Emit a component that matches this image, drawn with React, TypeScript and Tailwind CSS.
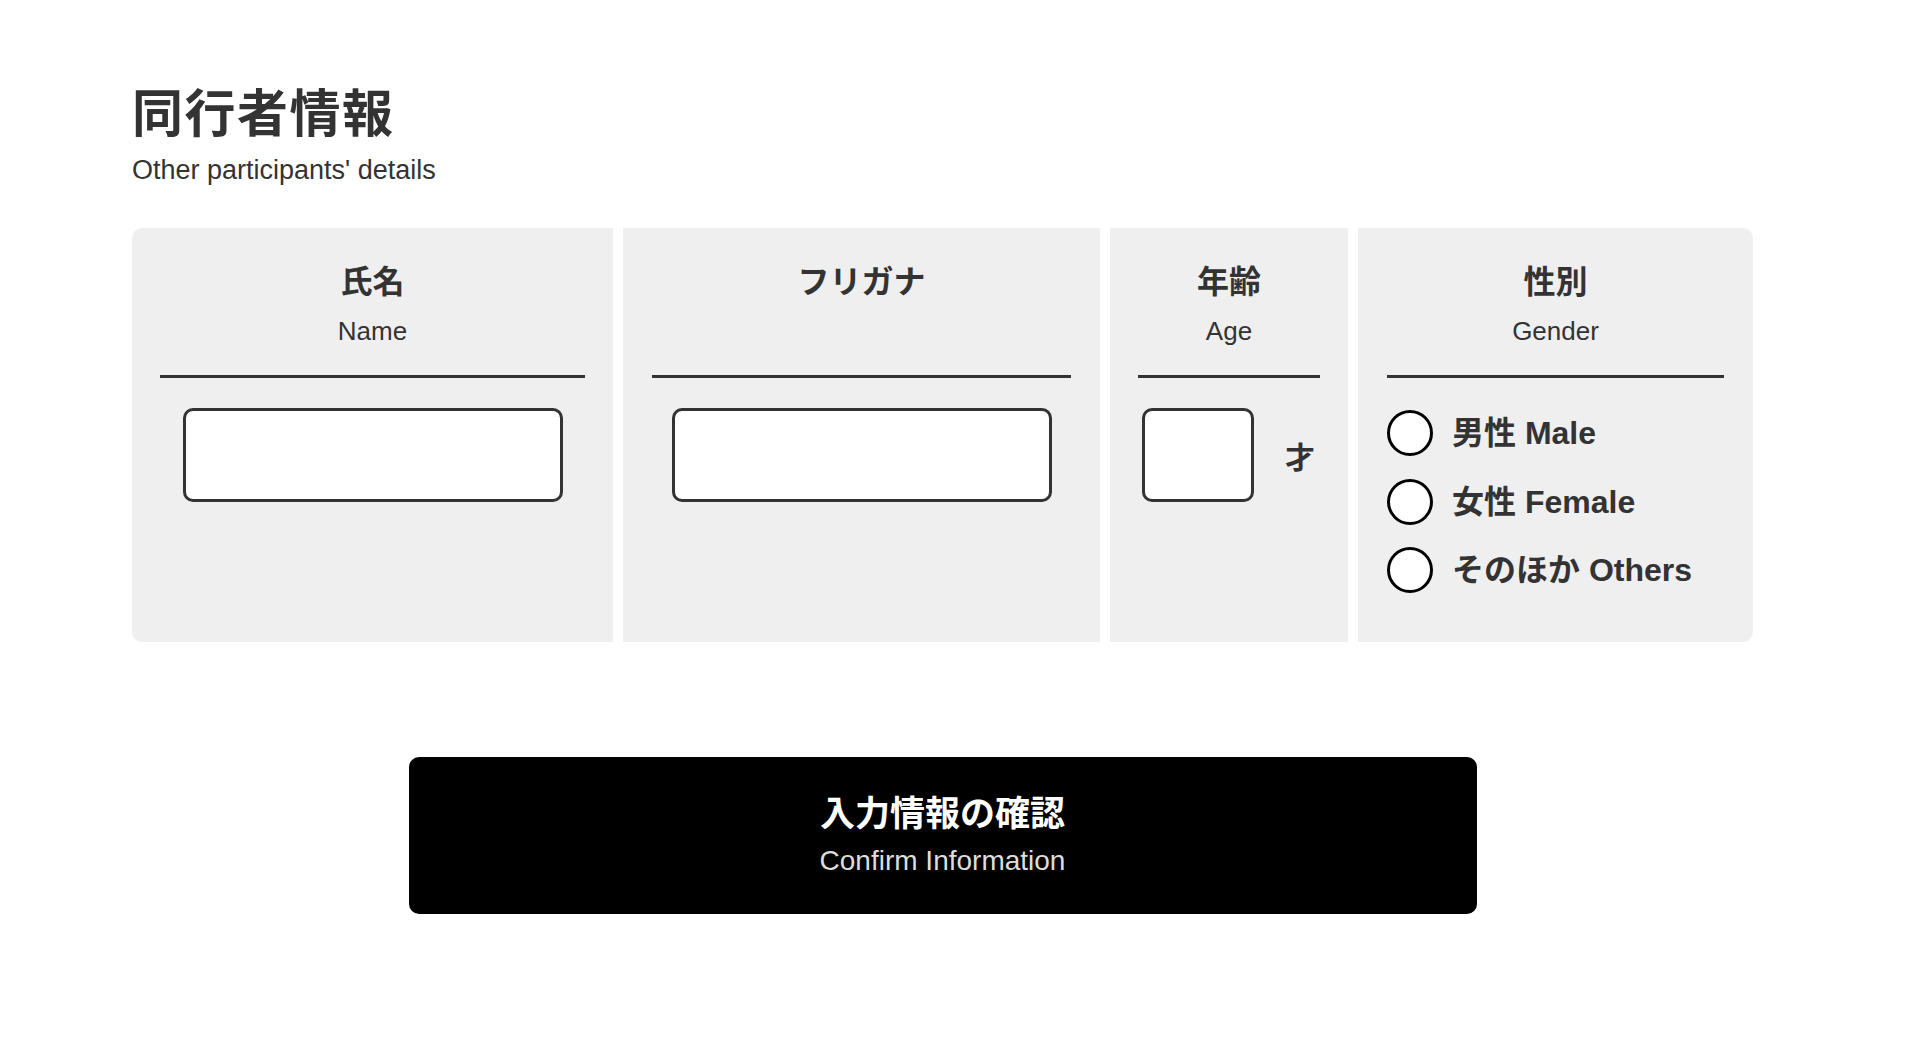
const JP = "font-['Noto_Sans_CJK_JP',sans-serif]";
const LATIN = "font-['Liberation_Sans','Noto_Sans_CJK_JP',sans-serif]";

function Header({ jp, en }: { jp: string; en?: string }) {
  return (
    <>
      <div className={`${JP} text-center text-[32px] font-bold leading-[40px] text-[#333]`}>{jp}</div>
      <div className={`${LATIN} mt-[15px] h-[34px] text-center text-[26px] leading-[34px] text-[#333]`}>
        {en}
      </div>
      <div className="mt-[27px] h-[3px] bg-[#333]" />
    </>
  );
}

function TextBox({ className = "" }: { className?: string }) {
  return (
    <input
      type="text"
      className={`h-[94px] rounded-[10px] border-[3px] border-[#333] bg-white px-3 text-[26px] outline-none ${className}`}
    />
  );
}

const GENDERS = ["男性 Male", "女性 Female", "そのほか Others"];

export default function App() {
  return (
    <div className="min-h-screen bg-white pl-[132px] pt-[85px]">
      <h2 className={`${JP} text-[51px] font-bold leading-[51px] tracking-[1.5px] text-[#333]`}>同行者情報</h2>
      <p className={`${LATIN} mt-[18px] text-[27px] leading-[32px] text-[#333]`}>Other participants' details</p>

      <div className="w-[1621px]">
        <div className="mt-[42px] grid h-[414px] grid-cols-[481px_477px_238px_395px] gap-x-[10px]">
          {/* 氏名 */}
          <div className="rounded-l-[10px] bg-[#efefef] px-[28px] pt-[31px]">
            <Header jp="氏名" en="Name" />
            <div className="mt-[30px] flex justify-center">
              <TextBox className="w-[380px]" />
            </div>
          </div>

          {/* フリガナ */}
          <div className="bg-[#efefef] px-[29px] pt-[31px]">
            <Header jp="フリガナ" />
            <div className="mt-[30px] flex justify-center">
              <TextBox className="w-[380px]" />
            </div>
          </div>

          {/* 年齢 */}
          <div className="bg-[#efefef] px-[28px] pt-[31px]">
            <Header jp="年齢" en="Age" />
            <div className="mt-[30px] flex items-center gap-[31px] pl-[4px]">
              <TextBox className="w-[112px]" />
              <span className={`${JP} text-[30px] font-bold text-[#333]`}>才</span>
            </div>
          </div>

          {/* 性別 */}
          <div className="rounded-r-[10px] bg-[#efefef] px-[29px] pt-[31px]">
            <Header jp="性別" en="Gender" />
            <div className="mt-[32px] flex flex-col gap-[22.5px]">
              {GENDERS.map((g) => (
                <label key={g} className="flex h-[46px] items-center gap-[19px]">
                  <span className="h-[46px] w-[46px] shrink-0 rounded-full border-[3px] border-black bg-white" />
                  <span className={`${LATIN} text-[32px] font-bold leading-[46px] text-[#333]`}>{g}</span>
                </label>
              ))}
            </div>
          </div>
        </div>

        <button
          type="button"
          className="mx-auto mt-[115px] flex h-[157px] w-[1068px] flex-col items-center rounded-[10px] bg-black pt-[34px]"
        >
          <span className={`${JP} text-[35px] font-bold leading-[40px] text-white`}>入力情報の確認</span>
          <span className={`${LATIN} mt-[14px] text-[28px] leading-[32px] text-[#ddd]`}>Confirm Information</span>
        </button>
      </div>
    </div>
  );
}
